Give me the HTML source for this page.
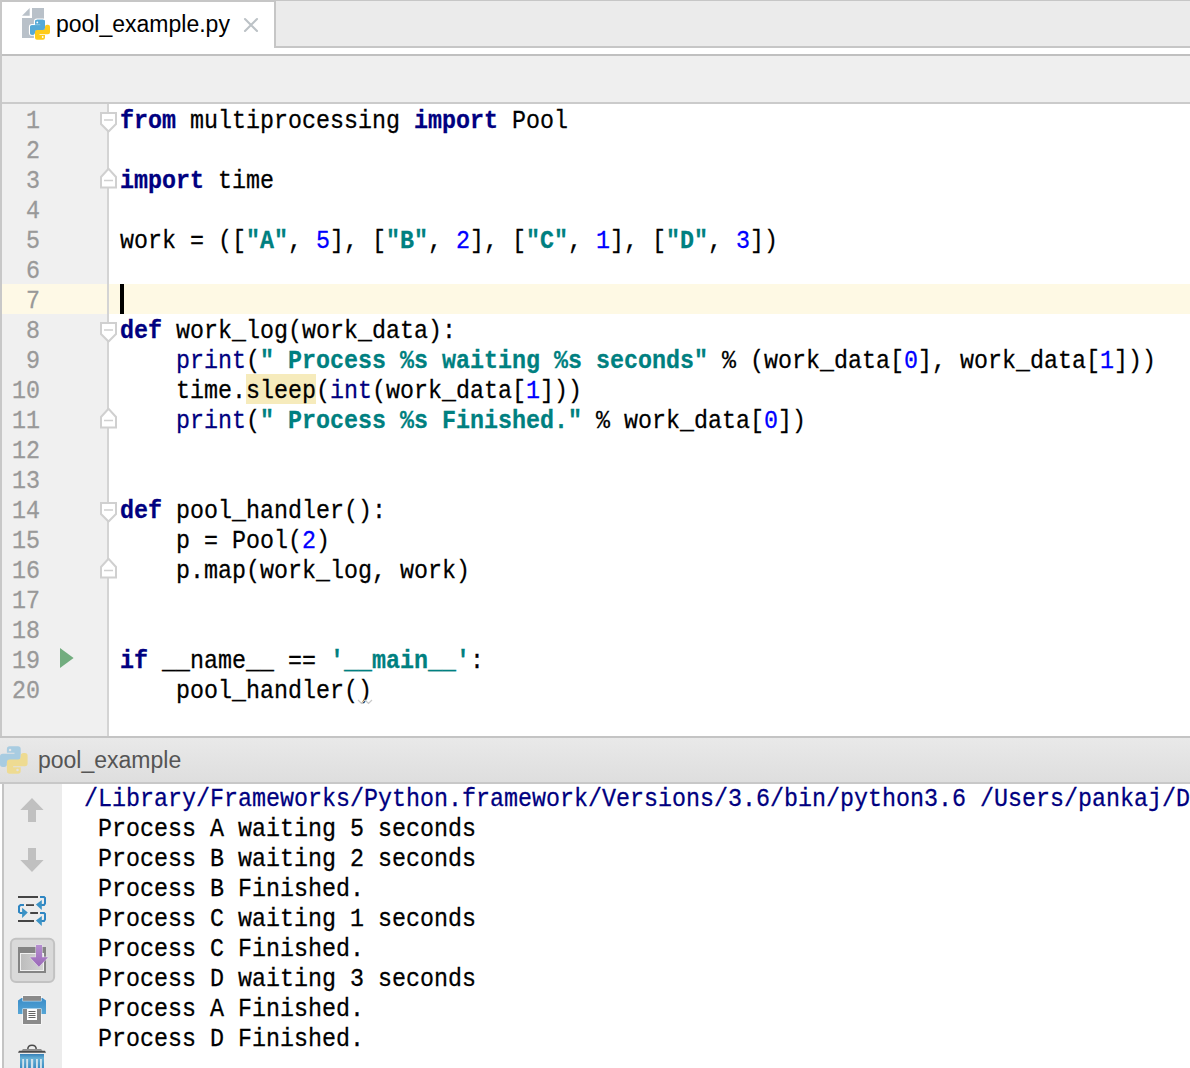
<!DOCTYPE html>
<html><head><meta charset="utf-8">
<style>
*{margin:0;padding:0;box-sizing:border-box}
html,body{width:1190px;height:1068px;overflow:hidden;background:#fff}
body{position:relative;font-family:"Liberation Sans",sans-serif}
.a{position:absolute}
.mono{font-family:"Liberation Mono",monospace;font-size:23.33px;line-height:30px}
.mono>div{white-space:pre;height:30px;-webkit-text-stroke:0.25px currentColor;transform:scaleY(1.08);transform-origin:0 21px}
.k{color:#000080;font-weight:bold}
.s{color:#008080;font-weight:bold}
.n{color:#0000ff}
.b{color:#000080}
.ln{color:#999999}
</style></head><body>

<!-- tab bar -->
<div class="a" style="left:0;top:0;width:1190px;height:1px;background:#c6c6c6"></div>
<div class="a" style="left:0;top:0;width:275px;height:2px;background:#c6c6c6"></div>
<div class="a" style="left:275px;top:1px;width:915px;height:45px;background:#ebebeb"></div>
<div class="a" style="left:274px;top:1px;width:2px;height:47px;background:#c6c6c6"></div>
<div class="a" style="left:274px;top:46px;width:916px;height:2px;background:#c6c6c6"></div>

<div class="a" style="left:0;top:54px;width:1190px;height:2px;background:#c0c0c0"></div>
<div class="a" style="left:0;top:56px;width:1190px;height:46px;background:#efefef"></div>
<div class="a" style="left:0;top:102px;width:1190px;height:2px;background:#cbcbcb"></div>
<div class="a" style="left:0;top:0;width:2px;height:736px;background:#c8c8c8"></div>

<div class="a" style="left:56px;top:9px;font-size:23px;line-height:30px;color:#000">pool_example.py</div>

<!-- editor -->
<div class="a" style="left:0;top:104px;width:2px;height:632px;background:#c8c8c8"></div>
<div class="a" style="left:2px;top:104px;width:105px;height:632px;background:#f0f0f0"></div>
<div class="a" style="left:2px;top:284px;width:105px;height:30px;background:#fef9e6"></div>
<div class="a" style="left:109px;top:284px;width:1081px;height:30px;background:#fef9e4"></div>
<div class="a" style="left:107px;top:104px;width:2px;height:632px;background:#d4d4d4"></div>
<div class="a" style="left:120px;top:284px;width:4px;height:30px;background:#000"></div>
<div class="a" style="left:246px;top:374px;width:70px;height:30px;background:#f6ebbc"></div>

<div id="code" class="a mono" style="left:120px;top:107px;color:#000">
<div><span class="k">from</span> multiprocessing <span class="k">import</span> Pool</div>
<div> </div>
<div><span class="k">import</span> time</div>
<div> </div>
<div>work = ([<span class="s">"A"</span>, <span class="n">5</span>], [<span class="s">"B"</span>, <span class="n">2</span>], [<span class="s">"C"</span>, <span class="n">1</span>], [<span class="s">"D"</span>, <span class="n">3</span>])</div>
<div> </div>
<div> </div>
<div><span class="k">def</span> work_log(work_data):</div>
<div>    <span class="b">print</span>(<span class="s">" Process %s waiting %s seconds"</span> % (work_data[<span class="n">0</span>], work_data[<span class="n">1</span>]))</div>
<div>    time.sleep(<span class="b">int</span>(work_data[<span class="n">1</span>]))</div>
<div>    <span class="b">print</span>(<span class="s">" Process %s Finished."</span> % work_data[<span class="n">0</span>])</div>
<div> </div>
<div> </div>
<div><span class="k">def</span> pool_handler():</div>
<div>    p = Pool(<span class="n">2</span>)</div>
<div>    p.map(work_log, work)</div>
<div> </div>
<div> </div>
<div><span class="k">if</span> __name__ == <span class="s">'__main__'</span>:</div>
<div>    pool_handler()</div>
</div>

<div id="lnums" class="a mono ln" style="left:12px;top:107px;width:28px;text-align:right">
<div>1</div><div>2</div><div>3</div><div>4</div><div>5</div><div>6</div><div>7</div><div>8</div><div>9</div><div>10</div><div>11</div><div>12</div><div>13</div><div>14</div><div>15</div><div>16</div><div>17</div><div>18</div><div>19</div><div>20</div>
</div>

<!-- console header -->
<div class="a" style="left:0;top:736px;width:1190px;height:2px;background:#c4c4c4"></div>
<div class="a" style="left:0;top:738px;width:1190px;height:44px;background:linear-gradient(#e9e9e9,#dedede)"></div>
<div class="a" style="left:0;top:782px;width:1190px;height:2px;background:#c8c8c8"></div>
<div class="a" style="left:38px;top:745px;font-size:23px;line-height:30px;color:#555">pool_example</div>

<!-- console -->
<div class="a" style="left:2px;top:784px;width:2px;height:284px;background:#c4c4c4"></div>
<div class="a" style="left:4px;top:784px;width:58px;height:284px;background:#ececec"></div>

<div id="cons" class="a mono" style="left:84px;top:785px;color:#000">
<div class="b">/Library/Frameworks/Python.framework/Versions/3.6/bin/python3.6 /Users/pankaj/Documents/PycharmProjects</div>
<div> Process A waiting 5 seconds</div>
<div> Process B waiting 2 seconds</div>
<div> Process B Finished.</div>
<div> Process C waiting 1 seconds</div>
<div> Process C Finished.</div>
<div> Process D waiting 3 seconds</div>
<div> Process A Finished.</div>
<div> Process D Finished.</div>
</div>


<svg class="a" style="left:0;top:0" width="1190" height="1068" viewBox="0 0 1190 1068">
<defs>
<path id="py" d="M5,2 Q5,0 7,0 H13 Q15,0 15,2 V8.3 Q15,10.3 13,10.3 H7 Q5,10.3 5,12.3 V13 Q5,15 3,15 H2 Q0,15 0,13 V7.5 Q0,5.5 2,5.5 H10.5 V4.8 H5 Z"/>
<linearGradient id="pg" x1="0" y1="0" x2="0" y2="1"><stop offset="0" stop-color="#b68fd0"/><stop offset="1" stop-color="#9a68b8"/></linearGradient>
<linearGradient id="wg" x1="0" y1="0" x2="1" y2="0"><stop offset="0" stop-color="#bdbdbd"/><stop offset="1" stop-color="#d3d3d3"/></linearGradient>
<linearGradient id="tg" x1="0" y1="0" x2="0" y2="1"><stop offset="0" stop-color="#3580b8"/><stop offset="0.3" stop-color="#66b0d5"/><stop offset="1" stop-color="#3c8cc2"/></linearGradient>
<linearGradient id="bg1" x1="0" y1="0" x2="0" y2="1"><stop offset="0" stop-color="#3a8cc8"/><stop offset="1" stop-color="#56a6d6"/></linearGradient>
</defs>
<!-- tab file icon -->
<polygon points="22,15.7 29.7,8 29.7,15.7" fill="#b9c1c9"/>
<polygon points="32,8 44,8 44,38 22,38 22,18 32,18" fill="#b9c1c9"/>
<g transform="translate(30,19.7)">
<use href="#py" fill="#55a9d6" stroke="#fff" stroke-width="2.2" paint-order="stroke"/>
<use href="#py" fill="#fecb19" stroke="#fff" stroke-width="2.2" paint-order="stroke" transform="rotate(180 10 10)"/>
<use href="#py" fill="#55a9d6"/>
<circle cx="7.3" cy="2.7" r="0.9" fill="#fff"/>
<circle cx="12.7" cy="17.3" r="0.9" fill="#fff"/>
</g>
<!-- close x -->
<path d="M245,19 L257,31 M257,19 L245,31" stroke="#bcc2c6" stroke-width="2.1" stroke-linecap="round"/>

<!-- fold markers -->
<g fill="#fff" stroke="#d0d0d0" stroke-width="2">
<path d="M101,113 H116 V124 L108.5,131.5 L101,124 Z"/>
<path d="M101,187.5 H116 V177 L108.5,168.8 L101,177 Z"/>
<path d="M101,323 H116 V334 L108.5,341.5 L101,334 Z"/>
<path d="M101,427.5 H116 V417 L108.5,408.8 L101,417 Z"/>
<path d="M101,503 H116 V514 L108.5,521.5 L101,514 Z"/>
<path d="M101,577.5 H116 V567 L108.5,558.8 L101,567 Z"/>
</g>
<g stroke="#d0d0d0" stroke-width="1.6">
<path d="M104,120 H113 M104,180.5 H113 M104,330 H113 M104,420.5 H113 M104,510 H113 M104,570.5 H113"/>
</g>
<!-- run icon -->
<polygon points="60,648 73.6,658 60,668" fill="#72ad7f"/>
<!-- squiggle -->
<polyline points="358,700 361.5,703.5 365,700 368.5,703.5 372,700" fill="none" stroke="#c8c8c8" stroke-width="1.2"/>

<!-- console python icon -->
<g transform="translate(0,746.2) scale(1.38)">
<use href="#py" fill="#a8cce1"/>
<use href="#py" fill="#eedb92" transform="rotate(180 10 10)"/>
<circle cx="7.3" cy="2.7" r="0.9" fill="#e6e6e6"/>
<circle cx="12.7" cy="17.3" r="0.9" fill="#e2e2e2"/>
</g>

<!-- toolbar icons -->
<polygon points="32,798 43.6,810 36,810 36,822 28,822 28,810 20.3,810" fill="#c0c0c0"/>
<polygon points="28,848 36,848 36,860 43.6,860 32,872 20.3,860 28,860" fill="#c0c0c0"/>
<!-- soft wrap -->
<g fill="#454545">
<rect x="18" y="896" width="20" height="2"/>
<rect x="26" y="904.2" width="8" height="1.8"/>
<rect x="30.2" y="912" width="7.8" height="2"/>
<rect x="18" y="920" width="16" height="2"/>
</g>
<g fill="none" stroke="#2f86c2" stroke-width="2">
<path d="M40,897 H44 L45,898 V903.5 L44,905 H41"/>
<path d="M24,905 H20.5 L19,906.5 V912 L20.5,913 H23"/>
<path d="M40,913 H44 L45,914 V919.5 L44,921 H41"/>
</g>
<g fill="#3b93c6">
<polygon points="35.9,904.5 41.8,900 41.8,909.9"/>
<polygon points="27.8,912.6 22.1,907.7 22.1,918"/>
<polygon points="35.9,920.6 41.8,916 41.8,926"/>
</g>
<!-- scroll to end -->
<rect x="10.9" y="938.8" width="43.2" height="43.2" rx="5" fill="#d9d9d9" stroke="#c2c2c2" stroke-width="2"/>
<rect x="19" y="948" width="26" height="24" fill="none" stroke="#848484" stroke-width="2"/>
<rect x="18" y="947" width="28" height="6" fill="#848484"/>
<rect x="20" y="953" width="24" height="18" fill="#f0f0f0"/>
<rect x="21" y="954" width="22" height="16" fill="url(#wg)"/>
<polygon points="36,945 42,945 42,957.2 48,957.2 38.9,966.8 30,957.2 36,957.2" fill="url(#pg)" stroke="#e8e0ee" stroke-width="1" paint-order="stroke"/>
<!-- print -->
<polygon points="18,1000.5 21.5,998 42.5,998 46,1000.5 46,1014 18,1014" fill="url(#bg1)"/>
<rect x="23" y="996" width="18" height="4.8" fill="#8a8a8a" stroke="#fff" stroke-width="1" paint-order="stroke"/>
<rect x="23" y="1009" width="18" height="15" fill="#8a8a8a" stroke="#fff" stroke-width="1" paint-order="stroke"/>
<rect x="27" y="1009" width="10" height="11" fill="#fff"/>
<g fill="#555"><rect x="28.5" y="1011" width="7" height="0.9"/><rect x="28.5" y="1013" width="7" height="0.9"/><rect x="28.5" y="1015" width="7" height="0.9"/><rect x="28.5" y="1017" width="7" height="0.9"/></g>
<!-- trash -->
<path d="M27.8,1049.3 Q27.8,1045.3 32,1045.3 Q36.2,1045.3 36.2,1049.3" fill="none" stroke="#4a4a4a" stroke-width="1.5"/>
<polygon points="23,1049 41,1049 42.5,1050.8 21.5,1050.8" fill="#8c8c8c"/>
<polygon points="19,1050.8 45,1050.8 46,1052.8 18,1052.8" fill="#4a4a4a"/>
<rect x="20" y="1054" width="24" height="14" fill="url(#tg)"/>
<g fill="#d0e1eb"><rect x="22.2" y="1059" width="1.9" height="9"/><rect x="26.2" y="1059" width="1.9" height="9"/><rect x="30.9" y="1059" width="2.3" height="9"/><rect x="36" y="1059" width="1.9" height="9"/><rect x="40" y="1059" width="1.9" height="9"/></g>
</svg>

</body></html>
